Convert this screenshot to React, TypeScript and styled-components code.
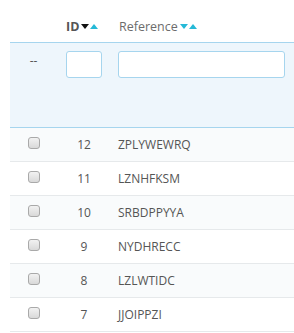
import React from "react";
import styled, { createGlobalStyle } from "styled-components";

const Global = createGlobalStyle`
  html, body { margin: 0; padding: 0; background: #fff; }
  body { font-family: "Open Sans", "Liberation Sans", sans-serif; font-size: 12px; color: #555; }
`;

const Page = styled.div`
  padding-left: 10px;
`;

const Grid = styled.div`
  display: grid;
  grid-template-columns: 46px 62px 1fr;
`;

const HeadCell = styled.div<{ $bold?: boolean; $pad?: number }>`
  height: 42px;
  box-sizing: border-box;
  display: flex;
  align-items: center;
  padding-top: 10px;
  padding-left: ${(p) => p.$pad ?? 0}px;
  font-size: 12.5px;
  font-weight: ${(p) => (p.$bold ? 700 : 400)};
  color: ${(p) => (p.$bold ? "#555" : "#6c6c6c")};
`;

const Arrows = styled.span`
  display: inline-flex;
  gap: 1px;
  margin-left: 2px;
  align-items: center;
`;

const Caret = ({ up, color }: { up?: boolean; color: string }) => (
  <svg width="8" height="5" viewBox="0 0 8 5">
    {up ? <polygon points="0,5 8,5 4,0" fill={color} /> : <polygon points="0,0 8,0 4,5" fill={color} />}
  </svg>
);

const FilterCell = styled.div<{ $pad?: number; $center?: boolean }>`
  height: 86px;
  box-sizing: border-box;
  background: #eef6fc;
  border-top: 1px solid #a6d5ee;
  border-bottom: 1px solid #a6d5ee;
  padding-top: 8px;
  padding-left: ${(p) => p.$pad ?? 0}px;
  display: flex;
  justify-content: ${(p) => (p.$center ? "center" : "flex-start")};
  align-items: flex-start;
`;

const Dash = styled.span`
  line-height: 20px;
  padding-left: 1px;
  color: #555;
`;

const Input = styled.input<{ $w: number }>`
  width: ${(p) => p.$w}px;
  height: 27px;
  box-sizing: border-box;
  border: 1px solid #a6d5ee;
  border-radius: 3px;
  background: #fff;
  padding: 0 6px;
  outline: none;
`;

const Cell = styled.div<{ $striped: boolean; $center?: boolean; $pad?: number; $padR?: number }>`
  height: 34px;
  box-sizing: border-box;
  border-bottom: 1px solid #e6e9eb;
  background: ${(p) => (p.$striped ? "#f9fbfc" : "#fff")};
  display: flex;
  align-items: center;
  justify-content: ${(p) => (p.$center ? "center" : "flex-start")};
  padding-left: ${(p) => p.$pad ?? 0}px;
  padding-right: ${(p) => p.$padR ?? 0}px;
  color: #555;
  font-size: 12px;
`;

const Check = styled.span`
  width: 12px;
  height: 12px;
  box-sizing: border-box;
  border: 1px solid #a9a9a9;
  border-radius: 3px;
  background: linear-gradient(#f2f2f2, #d9d9d9);
  margin-top: -3px;
  margin-left: 1px;
`;

const rows = [
  { id: 12, ref: "ZPLYWEWRQ" },
  { id: 11, ref: "LZNHFKSM" },
  { id: 10, ref: "SRBDPPYYA" },
  { id: 9, ref: "NYDHRECC" },
  { id: 8, ref: "LZLWTIDC" },
  { id: 7, ref: "JJOIPPZI" },
];

export default function App() {
  return (
    <Page>
      <Global />
      <Grid>
        <HeadCell />
        <HeadCell $bold $pad={10}>
          ID
          <Arrows>
            <Caret color="#111" />
            <Caret up color="#25b9d7" />
          </Arrows>
        </HeadCell>
        <HeadCell $pad={1}>
          Reference
          <Arrows>
            <Caret color="#25b9d7" />
            <Caret up color="#25b9d7" />
          </Arrows>
        </HeadCell>

        <FilterCell $center>
          <Dash>--</Dash>
        </FilterCell>
        <FilterCell $pad={10}>
          <Input $w={36} />
        </FilterCell>
        <FilterCell>
          <Input $w={167} />
        </FilterCell>

        {rows.map((r, i) => (
          <React.Fragment key={r.id}>
            <Cell $striped={i % 2 === 0} $center>
              <Check />
            </Cell>
            <Cell $striped={i % 2 === 0} $center $pad={10} $padR={16}>
              {r.id}
            </Cell>
            <Cell $striped={i % 2 === 0}>{r.ref}</Cell>
          </React.Fragment>
        ))}
      </Grid>
    </Page>
  );
}
